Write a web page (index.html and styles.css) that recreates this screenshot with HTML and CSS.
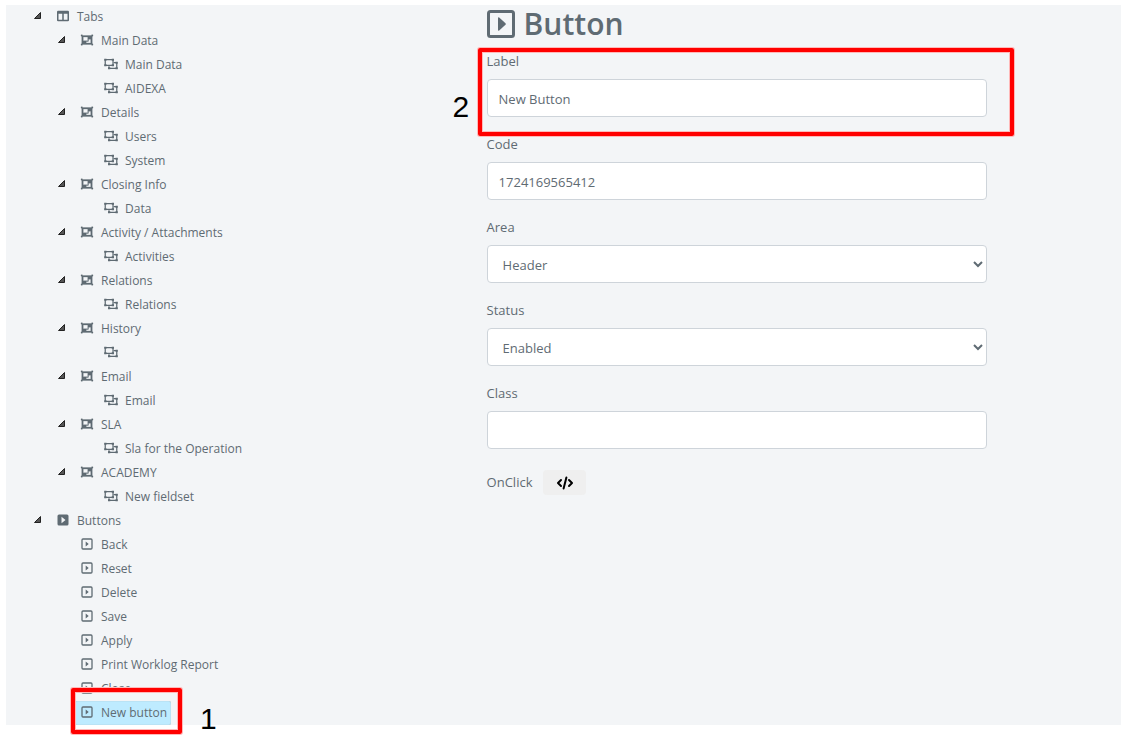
FILE: index.html
```html
<!DOCTYPE html>
<html lang="en">
<head>
    <meta charset="UTF-8">
    <meta name="viewport" content="width=device-width, initial-scale=1.0">
    <title>Button</title>
    <link rel="stylesheet" href="styles.css">
</head>
<body>
    <!-- icon shapes used by the tree and the form -->
    <svg class="sprite" aria-hidden="true">
        <symbol id="toggle" viewBox="0 0 7 7">
            <path d="M6.5 .5v6h-6z" fill="#555" stroke="#222"/>
        </symbol>
        <symbol id="columns" viewBox="0 0 512 512">
            <path fill-rule="evenodd" d="M48 32h416q48 0 48 48v352q0 48-48 48H48q-48 0-48-48V80q0-48 48-48zM64 160v256h160V160zM288 160v256h160V160z"/>
        </symbol>
        <symbol id="group" viewBox="0 0 512 512">
            <path stroke="currentColor" stroke-width="12" fill-rule="evenodd" d="M480 128V96h20q12 0 12-12V44q0-12-12-12h-40q-12 0-12 12v20H64V44q0-12-12-12H12Q0 32 0 44v40q0 12 12 12h20v320H12q-12 0-12 12v40q0 12 12 12h40q12 0 12-12v-20h384v20q0 12 12 12h40q12 0 12-12v-40q0-12-12-12h-20zM96 276V140q0-12 12-12h168q12 0 12 12v136q0 12-12 12H108q-12 0-12-12zM416 372q0 12-12 12H236q-12 0-12-12v-52h72q24 0 24-24v-72h84q12 0 12 12z"/>
        </symbol>
        <symbol id="ungroup" viewBox="0 0 576 512">
            <path fill="none" stroke="currentColor" stroke-width="54" d="M42 74h332v236H42zM410 202h124v236H202v-90"/>
            <path d="M0 32h96v84H0zM320 32h96v84h-96zM0 268h96v84H0zM320 268h96v84h-96zM480 160h96v84h-96zM480 396h96v84h-96zM160 396h96v84h-96z"/>
        </symbol>
        <symbol id="play-solid" viewBox="0 0 12 12">
            <path fill-rule="evenodd" d="M2 .5h8A1.500 1.500 0 0 1 11.500 2v8a1.500 1.500 0 0 1-1.500 1.500H2A1.500 1.500 0 0 1 .5 10V2A1.500 1.500 0 0 1 2 .5zM4.500 2.800v6.400L8.500 6z"/>
        </symbol>
        <symbol id="play" viewBox="0 0 12 12">
            <rect x="1" y="1" width="10" height="10" rx="1" fill="none" stroke="currentColor" stroke-width="1.300"/>
            <path d="M4.700 3.600v4.800L7.700 6z"/>
        </symbol>
        <symbol id="play-large" viewBox="0 0 28 28">
            <rect x="1.500" y="1.500" width="25" height="25" rx="2" fill="none" stroke="currentColor" stroke-width="3"/>
            <path d="M11 8.200q0-1.500 1.200-.6l6.300 5.700q.7.700 0 1.400l-6.300 5.700q-1.200.9-1.200-.6z"/>
        </symbol>
        <symbol id="code" viewBox="0 0 18 14">
            <path fill="none" stroke="currentColor" stroke-width="2" stroke-linecap="round" stroke-linejoin="round" d="M5 4L2 7l3 3M13 4l3 3-3 3M10.400 1.500L7.600 12.500"/>
        </symbol>
    </svg>

    <div class="designer">
        <nav class="tree-panel" aria-label="Form structure">
            <ul class="tree">
                <li>
                    <button class="toggle" aria-label="Toggle Tabs"><svg><use href="#toggle"/></svg></button>
                    <a href="#"><svg><use href="#columns"/></svg>Tabs</a>
                    <ul>
                        <li>
                            <button class="toggle" aria-label="Toggle Main Data"><svg><use href="#toggle"/></svg></button>
                            <a href="#"><svg><use href="#group"/></svg>Main Data</a>
                            <ul>
                                <li><a href="#"><svg><use href="#ungroup"/></svg>Main Data</a></li>
                                <li><a href="#"><svg><use href="#ungroup"/></svg>AIDEXA</a></li>
                            </ul>
                        </li>
                        <li>
                            <button class="toggle" aria-label="Toggle Details"><svg><use href="#toggle"/></svg></button>
                            <a href="#"><svg><use href="#group"/></svg>Details</a>
                            <ul>
                                <li><a href="#"><svg><use href="#ungroup"/></svg>Users</a></li>
                                <li><a href="#"><svg><use href="#ungroup"/></svg>System</a></li>
                            </ul>
                        </li>
                        <li>
                            <button class="toggle" aria-label="Toggle Closing Info"><svg><use href="#toggle"/></svg></button>
                            <a href="#"><svg><use href="#group"/></svg>Closing Info</a>
                            <ul>
                                <li><a href="#"><svg><use href="#ungroup"/></svg>Data</a></li>
                            </ul>
                        </li>
                        <li>
                            <button class="toggle" aria-label="Toggle Activity / Attachments"><svg><use href="#toggle"/></svg></button>
                            <a href="#"><svg><use href="#group"/></svg>Activity / Attachments</a>
                            <ul>
                                <li><a href="#"><svg><use href="#ungroup"/></svg>Activities</a></li>
                            </ul>
                        </li>
                        <li>
                            <button class="toggle" aria-label="Toggle Relations"><svg><use href="#toggle"/></svg></button>
                            <a href="#"><svg><use href="#group"/></svg>Relations</a>
                            <ul>
                                <li><a href="#"><svg><use href="#ungroup"/></svg>Relations</a></li>
                            </ul>
                        </li>
                        <li>
                            <button class="toggle" aria-label="Toggle History"><svg><use href="#toggle"/></svg></button>
                            <a href="#"><svg><use href="#group"/></svg>History</a>
                            <ul>
                                <li><a href="#" aria-label="Unnamed fieldset"><svg><use href="#ungroup"/></svg></a></li>
                            </ul>
                        </li>
                        <li>
                            <button class="toggle" aria-label="Toggle Email"><svg><use href="#toggle"/></svg></button>
                            <a href="#"><svg><use href="#group"/></svg>Email</a>
                            <ul>
                                <li><a href="#"><svg><use href="#ungroup"/></svg>Email</a></li>
                            </ul>
                        </li>
                        <li>
                            <button class="toggle" aria-label="Toggle SLA"><svg><use href="#toggle"/></svg></button>
                            <a href="#"><svg><use href="#group"/></svg>SLA</a>
                            <ul>
                                <li><a href="#"><svg><use href="#ungroup"/></svg>Sla for the Operation</a></li>
                            </ul>
                        </li>
                        <li>
                            <button class="toggle" aria-label="Toggle ACADEMY"><svg><use href="#toggle"/></svg></button>
                            <a href="#"><svg><use href="#group"/></svg>ACADEMY</a>
                            <ul>
                                <li><a href="#"><svg><use href="#ungroup"/></svg>New fieldset</a></li>
                            </ul>
                        </li>
                    </ul>
                </li>
                <li>
                    <button class="toggle" aria-label="Toggle Buttons"><svg><use href="#toggle"/></svg></button>
                    <a href="#"><svg><use href="#play-solid"/></svg>Buttons</a>
                    <ul>
                        <li><a href="#"><svg><use href="#play"/></svg>Back</a></li>
                        <li><a href="#"><svg><use href="#play"/></svg>Reset</a></li>
                        <li><a href="#"><svg><use href="#play"/></svg>Delete</a></li>
                        <li><a href="#"><svg><use href="#play"/></svg>Save</a></li>
                        <li><a href="#"><svg><use href="#play"/></svg>Apply</a></li>
                        <li><a href="#"><svg><use href="#play"/></svg>Print Worklog Report</a></li>
                        <li><a href="#"><svg><use href="#play"/></svg>Close</a></li>
                        <li>
                            <a href="#" class="selected"><svg><use href="#play"/></svg>New button
                                <span class="mark mark-node"></span>
                                <span class="step step-node">1</span>
                            </a>
                        </li>
                    </ul>
                </li>
            </ul>
        </nav>

        <main class="form-panel">
            <h1><svg><use href="#play-large"/></svg>Button</h1>
            <form class="properties">
                <div class="field">
                    <label for="label">Label</label>
                    <input type="text" id="label" name="label" value="New Button">
                    <span class="mark mark-field"></span>
                    <span class="step step-field">2</span>
                </div>
                <div class="field">
                    <label for="code-value">Code</label>
                    <input type="text" id="code-value" name="code" value="1724169565412">
                </div>
                <div class="field">
                    <label for="area">Area</label>
                    <select id="area" name="area">
                        <option>Header</option>
                    </select>
                </div>
                <div class="field">
                    <label for="status">Status</label>
                    <select id="status" name="status">
                        <option>Enabled</option>
                    </select>
                </div>
                <div class="field">
                    <label for="class">Class</label>
                    <input type="text" id="class" name="class">
                </div>
                <div class="event">
                    <label for="onclick">OnClick</label>
                    <button type="button" id="onclick" class="code-btn"><svg><use href="#code"/></svg></button>
                </div>
            </form>
        </main>
    </div>
</body>
</html>
```

FILE: styles.css
```css
* {
    box-sizing: border-box;
}

body {
    min-height: 100vh;
    margin: 0;
    padding: 5px 0 30px 6px;
    background: #fff;
    color: #5f6b73;
    font-family: "Segoe UI", "Open Sans", "Noto Sans", sans-serif;
    font-size: 13px;
    line-height: 21px;
}

svg {
    fill: currentColor;
}

.sprite {
    position: absolute;
    width: 0;
    height: 0;
}

.designer {
    display: grid;
    grid-template-columns: 5fr 7fr;
    background: #f3f5f7;
}

/* Tree */
.tree-panel {
    font-size: 12px;
    line-height: 24px;
}

.tree,
.tree ul {
    list-style: none;
    margin: 0;
    padding: 0;
}

.tree {
    padding-left: 21px;
}

.tree ul {
    padding-left: 24px;
}

.tree li {
    display: grid;
    grid-template-columns: 24px 1fr;
}

.tree li > ul {
    grid-column: 1 / -1;
}

.tree a {
    grid-column: 2;
    justify-self: start;
    display: flex;
    align-items: center;
    position: relative;
    height: 24px;
    padding-right: 4px;
    border-radius: 2px;
    color: inherit;
    text-decoration: none;
    white-space: nowrap;
}

.tree a > svg {
    width: 14px;
    height: 12px;
    margin: 0 7px 2px 5px;
}

.tree a.selected {
    background: #beebff;
    box-shadow: inset 0 0 1px #999;
}

.toggle {
    display: flex;
    align-items: center;
    justify-content: center;
    height: 24px;
    padding: 0 4px 3px 0;
    border: 0;
    background: none;
}

.toggle svg {
    width: 7px;
    height: 7px;
}

/* Form */
.form-panel {
    padding: 0 16px;
}

h1 {
    display: flex;
    align-items: center;
    gap: 9px;
    height: 38px;
    margin: 0 0 8px;
    font-size: 30px;
    font-weight: 600;
    line-height: 38px;
}

h1 svg {
    width: 28px;
    height: 28px;
}

.properties {
    max-width: 500px;
}

.field {
    position: relative;
    margin-bottom: 17px;
}

.field label {
    display: block;
    margin-bottom: 7px;
}

.field input,
.field select {
    display: block;
    width: 100%;
    height: 38px;
    padding: 6px 11px 4px;
    border: 1px solid #ced4da;
    border-radius: 4px;
    background: #fff;
    color: #5f6b73;
    font: inherit;
}

.event {
    display: flex;
    align-items: center;
    gap: 11px;
    padding-top: 4px;
}

.code-btn {
    display: flex;
    align-items: center;
    justify-content: center;
    width: 43px;
    height: 25px;
    padding: 0;
    border: 0;
    border-radius: 4px;
    background: #efefef;
    color: #000;
}

.code-btn svg {
    width: 18px;
    height: 14px;
}

/* Numbered callouts */
.mark {
    position: absolute;
    border: 4px solid #f00;
    border-radius: 2px;
    box-shadow: 0 0 0 1px #ffb9b9, inset 0 0 0 1px #ffb9b9;
    pointer-events: none;
}

.mark-node {
    inset: -13px -11px -9px -4px;
}

.mark-field {
    inset: -3px -27px -19px -9px;
}

.step {
    position: absolute;
    color: #000;
    font-family: Arial, "Liberation Sans", sans-serif;
    font-size: 30px;
    line-height: 30px;
}

.step-node {
    top: 3px;
    left: 125px;
}

.step-field {
    top: 41px;
    left: -34px;
}
```
